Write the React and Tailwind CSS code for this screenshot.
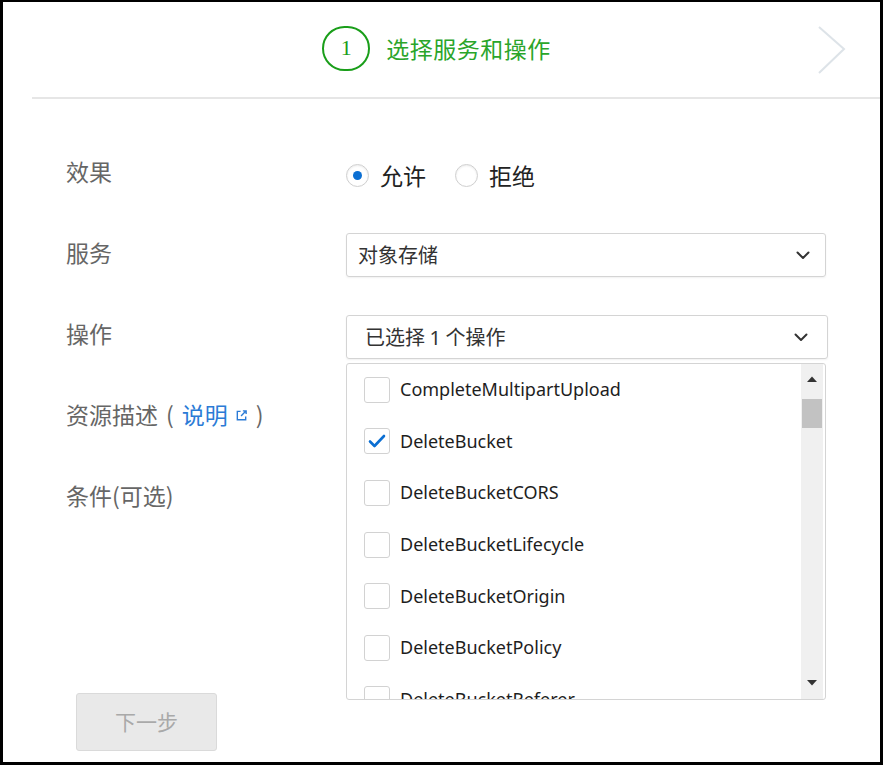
import React from 'react';

const cjk = '"Noto Sans CJK SC", "Noto Sans", sans-serif';
const latin = '"Noto Sans", "Noto Sans CJK SC", sans-serif';

const actions = [
  'CompleteMultipartUpload',
  'DeleteBucket',
  'DeleteBucketCORS',
  'DeleteBucketLifecycle',
  'DeleteBucketOrigin',
  'DeleteBucketPolicy',
  'DeleteBucketReferer',
];

const Chevron = () => (
  <svg width="14" height="9" viewBox="0 0 14 9" className="shrink-0">
    <path d="M1.5 1.5 L7 7 L12.5 1.5" fill="none" stroke="#333" strokeWidth="2" strokeLinecap="round" strokeLinejoin="round" />
  </svg>
);

const Radio = ({ checked, label }) => (
  <label className="flex items-center">
    <span className="w-[23px] h-[23px] rounded-full border-[1.5px] border-[#cfcfcf] flex items-center justify-center shadow-[inset_0_1px_2px_rgba(0,0,0,0.08)]">
      {checked && <span className="w-[9px] h-[9px] rounded-full bg-[#0b6fd3]" />}
    </span>
    <span className="ml-[11px] text-[23px] text-[#222]">{label}</span>
  </label>
);

const Checkbox = ({ checked }) => (
  <span className="w-[26px] h-[26px] rounded-[3px] border-[1.5px] border-[#d2d2d2] bg-white flex items-center justify-center shrink-0">
    {checked && (
      <svg width="18" height="14" viewBox="0 0 18 14">
        <path d="M2 7.5 L6.5 12 L16 2" fill="none" stroke="#0b6fd3" strokeWidth="2.6" strokeLinecap="round" strokeLinejoin="round" />
      </svg>
    )}
  </span>
);

export default function App() {
  return (
    <div
      className="w-[883px] h-[765px] bg-white border-l-[3px] border-t-2 border-r-[3px] border-b-[3px] border-black overflow-hidden flex flex-col"
      style={{ fontFamily: cjk }}
    >
      {/* step header */}
      <div className="h-[95px] shrink-0 grid grid-cols-[1fr_auto_1fr] items-center">
        <div />
        <div className="flex items-center pr-[10px] pb-[3px]">
          <div className="w-[48px] h-[45px] rounded-full border-[2.5px] border-[#1a9e1a] flex items-center justify-center text-[22px] text-[#1a9e1a] leading-none" style={{ fontFamily: '"Liberation Serif", serif' }}>
            1
          </div>
          <span className="ml-[16px] text-[23px] text-[#2aa52a] tracking-[0.5px]">选择服务和操作</span>
        </div>
        <div className="flex justify-end pr-[33px]">
          <svg width="30" height="50" viewBox="0 0 30 50">
            <path d="M2 2 L27 24 L2 48" fill="none" stroke="#dde3e8" strokeWidth="2" />
          </svg>
        </div>
      </div>
      <div className="ml-[29px] border-t-2 border-[#e6e6e6]" />

      {/* form */}
      <div className="flex flex-1">
        <div className="w-[343px] shrink-0 pt-[32px] pl-[63px] flex flex-col text-[23px] text-[#666]">
          <div className="h-[81px] flex items-center">效果</div>
          <div className="h-[81px] flex items-center">服务</div>
          <div className="h-[81px] flex items-center">操作</div>
          <div className="h-[81px] flex items-center">
            资源描述
            <span className="ml-[8px]">(</span>
            <span className="ml-[8px] text-[#2b7bd6] flex items-center">
              说明
              <svg width="13" height="13" viewBox="0 0 14 14" className="ml-[7px] mt-[2px]">
                <path d="M6 2.5 H2.5 V11.5 H11.5 V8" fill="none" stroke="#2b7bd6" strokeWidth="1.5" />
                <path d="M6.5 7.5 L12 2 M8.5 2 H12 V5.5" fill="none" stroke="#2b7bd6" strokeWidth="1.5" />
              </svg>
            </span>
            <span className="ml-[8px]">)</span>
          </div>
          <div className="h-[81px] flex items-center">条件(可选)</div>
          <button className="mt-[157px] ml-[10px] w-[141px] h-[58px] rounded-[3px] border-[1.5px] border-[#dadada] bg-[#e9e9e9] text-[21px] text-[#a9a9a9]">
            下一步
          </button>
        </div>

        <div className="pt-[54px] flex flex-col w-[482px]">
          <div className="h-[44px] flex items-center gap-[29px]">
            <Radio checked label="允许" />
            <Radio label="拒绝" />
          </div>
          <div className="mt-[36px] w-[480px] h-[44px] rounded-[3px] border-[1.5px] border-[#d4d4d4] shadow-[0_1px_2px_rgba(0,0,0,0.06)] flex items-center justify-between pl-[11px] pr-[15px] text-[20px] text-[#333]">
            <span>对象存储</span>
            <Chevron />
          </div>
          <div className="mt-[38px] w-[482px] h-[44px] rounded-[3px] border-[1.5px] border-[#d4d4d4] shadow-[0_1px_2px_rgba(0,0,0,0.06)] flex items-center justify-between pl-[18px] pr-[19px] text-[20px] text-[#333]">
            <span>已选择 <span style={{ fontFamily: latin }}>1</span> 个操作</span>
            <Chevron />
          </div>
          <div className="mt-[4px] w-[480px] h-[337px] rounded-[3px] border-[1.5px] border-[#d4d4d4] flex overflow-hidden">
            <div className="flex-1 overflow-hidden" style={{ fontFamily: latin }}>
              {actions.map((a, i) => (
                <div key={a} className="h-[51.6px] flex items-center pl-[17px]">
                  <Checkbox checked={i === 1} />
                  <span className="ml-[10px] text-[18px] text-[#1e1e1e]">{a}</span>
                </div>
              ))}
            </div>
            <div className="w-[22px] mr-[2px] bg-[#f0f0f0] flex flex-col items-center">
              <svg width="12" height="8" viewBox="0 0 12 8" className="mt-[11px]">
                <path d="M1 7 L6 1.5 L11 7 Z" fill="#333" />
              </svg>
              <div className="mt-[16px] w-[20px] h-[29px] bg-[#c2c2c2]" />
              <div className="flex-1" />
              <svg width="12" height="8" viewBox="0 0 12 8" className="mb-[12px]">
                <path d="M1 1 L6 6.5 L11 1 Z" fill="#333" />
              </svg>
            </div>
          </div>
        </div>
      </div>
    </div>
  );
}
